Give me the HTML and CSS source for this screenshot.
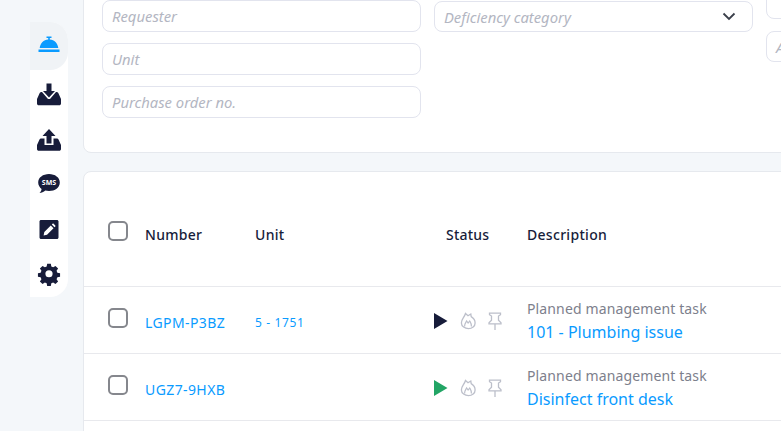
FILE: index.html
```html
<!DOCTYPE html>
<html lang="en">
<head>
<meta charset="utf-8">
<title>Tasks</title>
<link rel="stylesheet" href="styles.css">
</head>
<body>
<div class="page">
  <nav class="sidebar">
    <a class="nav-item active">
      <svg width="24" height="24" viewBox="0 -1 24 24"><path fill="#0a9bff" d="M9.500 1.500h5v1.400h-1.700v1.600c4.600.4 7.900 3.600 8.500 8.500H2.700c.6-4.900 3.900-8.100 8.500-8.500V2.900H9.500zM1.500 14.500h21v2.500h-21z"/></svg>
    </a>
    <a class="nav-item">
      <svg width="26" height="26" viewBox="0 -2 26 26"><path fill="#171c3a" d="M10.500 1.500h5V9H19l-6 6.500L7 9h3.500zM5.500 10H6l6 7h2l6-7h.5c.8 0 1.400.4 1.800 1.100L25 17v4.500c0 1-.8 1.800-1.800 1.800H2.800c-1 0-1.800-.8-1.800-1.800V17l2.700-5.900c.4-.7 1-1.100 1.800-1.100z"/></svg>
    </a>
    <a class="nav-item">
      <svg width="26" height="26" viewBox="0 -3 26 26"><path fill="#171c3a" d="M13 1l6.500 7H15.500v7.500h-5V8H6.500zM5 10.500h3.500V17h9v-6.500H21c.7 0 1.200.4 1.500 1L25 17v4c0 1-.8 1.800-1.800 1.800H2.800c-1 0-1.800-.8-1.800-1.800v-4l2.500-5.500c.3-.6.8-1 1.500-1z"/></svg>
    </a>
    <a class="nav-item">
      <svg width="24" height="24" viewBox="0 -3 24 24"><path fill="#171c3a" d="M12 0c6 0 10.800 3.500 10.800 8.500s-4.800 8.500-10.800 8.500c-1.300 0-2.600-.2-3.700-.5C6.700 18 4.500 19 2.500 19c1-1 1.900-2.500 2.100-4.100C2.600 13.400 1.200 11.100 1.200 8.500 1.200 3.500 6 0 12 0z"/></svg>
      <span class="sms">SMS</span>
    </a>
    <a class="nav-item">
      <svg width="20" height="20" viewBox="0 -1 20 20"><path fill="#171c3a" d="M2 0h16c.8 0 1.500.7 1.500 1.500v16c0 .8-.7 1.500-1.500 1.500H2c-.8 0-1.500-.7-1.500-1.500v-16C.5.7 1.200 0 2 0z"/><path fill="#fff" d="M11.800 5.500l2.700 2.700-6.500 6.500-3.400.7.700-3.400zM12.800 4.500l.8-.8c.3-.3.700-.3 1 0l1.700 1.700c.3.300.3.700 0 1l-.8.8z"/></svg>
    </a>
    <a class="nav-item">
      <svg width="24" height="24" viewBox="0 0 24 24"><path fill="#171c3a" fill-rule="evenodd" d="M10 1.500h4l.6 3 2 .9 2.600-1.600 2.900 2.900-1.700 2.500.9 2.100 3 .6v4l-3 .6-.9 2 1.700 2.600-2.900 2.800-2.600-1.600-2 .8-.6 3h-4l-.6-3-2-.8-2.600 1.600-2.900-2.800 1.700-2.600-.9-2-3-.6v-4l3-.6.9-2.100-1.700-2.500 2.900-2.900 2.600 1.600 2-.9zM12 8.500a4 4 0 100 8 4 4 0 000-8z" transform="translate(1.200 .5) scale(.9)"/></svg>
    </a>
  </nav>

  <main class="main">
    <section class="filters">
      <div class="filter-col">
        <div class="field">Requester</div>
        <div class="field">Unit</div>
        <div class="field">Purchase order no.</div>
      </div>
      <div class="filter-col">
        <div class="field field-select">Deficiency category
          <svg class="chevron" width="14" height="9" viewBox="0 0 14 9"><path fill="none" stroke="#3a3f4a" stroke-width="1.800" d="M1.500 1.500L7 7l5.500-5.500"/></svg>
        </div>
      </div>
      <div class="filter-col filter-col-last">
        <div class="field field-short"></div>
        <div class="field field-short">A</div>
      </div>
    </section>

    <section class="table">
      <div class="row row-head">
        <span class="check"></span>
        <span class="col-number">Number</span>
        <span class="col-unit">Unit</span>
        <span class="col-status">Status</span>
        <span class="col-desc">Description</span>
      </div>
      <div class="row">
        <span class="check"></span>
        <a class="col-number link">LGPM-P3BZ</a>
        <a class="col-unit link small">5 - 1751</a>
        <span class="col-status icons">
          <svg class="play" width="15" height="18" viewBox="0 0 15 18"><path fill="#171c3a" d="M1 1L14.500 9 1 17z"/></svg>
          <svg class="flame" width="16" height="18" viewBox="0 0 16 18"><path fill="none" stroke="#bcbfca" stroke-width="1.300" d="M5.500 1.500l2.500 2.300 2.800-1.800.4 2.600c2.300 1.400 3.900 3.400 3.900 6.300 0 3.300-3 5.800-6.600 5.800S1.400 14.300 1.400 11c0-4 3-5.500 4.100-9.500z"/><path fill="none" stroke="#bcbfca" stroke-width="1.200" d="M4.600 14.500c-.3-2.700 1.100-3.700 2-5.500l1.500 2 1.600-2c1.100 1.800 2 3 1.700 5.500"/></svg>
          <svg class="pin" width="14" height="18" viewBox="0 0 14 18"><path fill="none" stroke="#bcbfca" stroke-width="1.300" d="M1.500 1.200h11v1.500L10.500 4v4.300l2.500 2.500v1H1v-1l2.500-2.500V4L1.500 2.700zM7 11.800V18"/></svg>
        </span>
        <span class="col-desc desc"><small>Planned management task</small><a class="link big">101 - Plumbing issue</a></span>
      </div>
      <div class="row">
        <span class="check"></span>
        <a class="col-number link">UGZ7-9HXB</a>
        <span class="col-unit"></span>
        <span class="col-status icons">
          <svg class="play" width="15" height="18" viewBox="0 0 15 18"><path fill="#22a565" d="M1 1L14.500 9 1 17z"/></svg>
          <svg class="flame" width="16" height="18" viewBox="0 0 16 18"><path fill="none" stroke="#bcbfca" stroke-width="1.300" d="M5.500 1.500l2.500 2.300 2.800-1.800.4 2.600c2.300 1.400 3.900 3.400 3.900 6.300 0 3.300-3 5.800-6.600 5.800S1.400 14.300 1.400 11c0-4 3-5.500 4.100-9.500z"/><path fill="none" stroke="#bcbfca" stroke-width="1.200" d="M4.600 14.500c-.3-2.700 1.100-3.700 2-5.500l1.500 2 1.600-2c1.100 1.800 2 3 1.700 5.500"/></svg>
          <svg class="pin" width="14" height="18" viewBox="0 0 14 18"><path fill="none" stroke="#bcbfca" stroke-width="1.300" d="M1.500 1.200h11v1.500L10.500 4v4.300l2.500 2.500v1H1v-1l2.500-2.500V4L1.500 2.700zM7 11.800V18"/></svg>
        </span>
        <span class="col-desc desc"><small>Planned management task</small><a class="link big">Disinfect front desk</a></span>
      </div>
      <div class="row"></div>
    </section>
  </main>
</div>
</body>
</html>
```
FILE: styles.css
```css
html, body {
  margin: 0;
  height: 100%;
  overflow: hidden;
  background: #f4f7fa;
}
body {
  font-family: "Noto Sans", "Open Sans", sans-serif;
  color: #171c3a;
}
.page {
  display: flex;
  align-items: flex-start;
  padding-left: 30px;
  width: 1100px;
}
.sidebar {
  width: 38px;
  margin-top: 22px;
  height: 275px;
  background: #fff;
  border-bottom-right-radius: 18px;
  border-top-right-radius: 18px;
  display: flex;
  flex-direction: column;
  flex: none;
}
.nav-item {
  position: relative;
  height: 45.400px;
  display: flex;
  align-items: center;
  justify-content: center;
}
.nav-item.active {
  height: 48px;
  background: #f0f3f6;
  border-top-right-radius: 18px;
  border-bottom-right-radius: 18px;
}
.sms {
  position: absolute;
  left: 0;
  right: 0;
  top: 17.500px;
  text-align: center;
  font-size: 7px;
  line-height: 9px;
  font-weight: 700;
  color: #fff;
}
.main {
  margin-left: 15px;
  width: 1000px;
  flex: none;
}
.filters {
  box-sizing: border-box;
  height: 173px;
  margin-top: -20px;
  margin-bottom: 18px;
  padding: 19px 18px 0;
  background: #fff;
  border: 1px solid #e6e9ee;
  border-radius: 8px;
  display: flex;
  gap: 13px;
}
.filter-col {
  width: 319px;
  display: flex;
  flex-direction: column;
  gap: 11px;
  flex: none;
}
.filter-col-last {
  margin-top: -12px;
  gap: 12px;
}
.field {
  box-sizing: border-box;
  height: 32px;
  padding-left: 9px;
  display: flex;
  align-items: center;
  justify-content: space-between;
  background: #fff;
  border: 1px solid #e2e4ee;
  border-radius: 8px;
  font-size: 14.800px;
  font-style: italic;
  color: #b3b6c2;
}
.field-select {
  margin-top: 1px;
  height: 31px;
}
.field-short {
  height: 31px;
}
.chevron {
  margin-right: 16px;
}
.table {
  box-sizing: border-box;
  height: 400px;
  background: #fff;
  border: 1px solid #e6e9ee;
  border-radius: 8px;
}
.row {
  box-sizing: border-box;
  height: 67px;
  padding-left: 24px;
  display: flex;
  align-items: center;
  border-bottom: 1px solid #e8e9ed;
  font-size: 14px;
  letter-spacing: 0.4px;
}
.row-head {
  height: 115px;
  font-weight: 500;
  color: #171c3a;
  padding-top: 10px;
  letter-spacing: 0.3px;
}
.check {
  box-sizing: border-box;
  width: 20px;
  height: 20px;
  border: 2px solid #85878d;
  border-radius: 5px;
  flex: none;
  margin-top: -5px;
}
.row-head .check {
  margin-top: -6px;
}
.col-number {
  margin-left: 17px;
  width: 110px;
  flex: none;
  margin-top: 4px;
}
.row-head .col-number,
.row-head .col-unit,
.row-head .col-status,
.row-head .col-desc {
  margin-top: 0;
}
.col-unit {
  width: 178px;
  flex: none;
  margin-top: 4px;
}
.row-head .col-unit {
  width: 191px;
}
.row-head .col-status {
  width: 81px;
  letter-spacing: 0.2px;
}
.col-status {
  width: 94px;
  flex: none;
}
.link {
  color: #0a9bff;
}
.small {
  font-size: 12px;
  letter-spacing: 0.65px;
}
.icons {
  display: flex;
  align-items: center;
  gap: 12px;
  margin-top: 1px;
}
.desc {
  display: flex;
  flex-direction: column;
  gap: 3px;
  margin-top: 1px;
  letter-spacing: 0.13px;
}
.desc small {
  font-size: 14px;
  line-height: 19px;
  color: #7d808c;
}
.big {
  font-size: 16px;
  line-height: 22px;
  letter-spacing: 0;
}
```
